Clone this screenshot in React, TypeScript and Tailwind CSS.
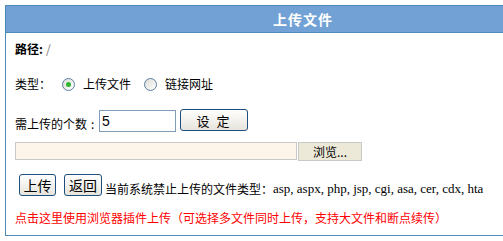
import React from 'react';

const cjk = "font-['Noto_Sans_CJK_SC',sans-serif]";

const Radio = ({ checked }: { checked: boolean }) => (
  <span className="flex h-[13px] w-[13px] items-center justify-center rounded-full border border-[#5a7ea5] bg-gradient-to-br from-[#dcdcd6] to-white">
    {checked && <span className="h-[5px] w-[5px] rounded-full bg-[#2fb52f]" />}
  </span>
);

const XpButton = ({ label, className }: { label: string; className?: string }) => (
  <button
    className={`flex items-center justify-center rounded-[3px] border border-[#1f4f7d] bg-gradient-to-b from-white to-[#e6e4dc] leading-none text-black ${className ?? ''}`}
  >
    {label}
  </button>
);

export default function App() {
  return (
    <div className={`h-[241px] w-[503px] overflow-hidden bg-white p-[5px] text-[12px] text-black ${cjk}`}>
      <div className="w-[596px] border border-[#4b8bb5]">
        <div className="flex h-[27px] items-center justify-center border-b border-[#4b8bb5] bg-[#72a2d5] text-[14px] font-bold tracking-[1px] text-white">
          上传文件
        </div>
        <div className="pb-[10px] pl-[9px]">
          <div className="mt-[8px] flex h-[16px] items-center">
            <span className="font-bold">路径:</span>
            <span className="ml-[3px] text-[#777]">/</span>
          </div>

          <div className="mt-[19px] flex h-[16px] items-center">
            <span>类型：</span>
            <span className="ml-[11px]"><Radio checked /></span>
            <span className="ml-[8px]">上传文件</span>
            <span className="ml-[13px]"><Radio checked={false} /></span>
            <span className="ml-[8px]">链接网址</span>
          </div>

          <div className="mt-[17px] flex h-[23px] items-start">
            <span className="mt-[6px] w-[84px] whitespace-nowrap">
              需上传的个数<span className="ml-[4px]">:</span>
            </span>
            <div className="mt-[1px] flex h-[22px] w-[77px] items-center border border-[#7f9db9] pl-[2px] font-['Liberation_Sans',sans-serif] text-[14px]">
              5
            </div>
            <XpButton label="设 定" className="ml-[4px] h-[22px] w-[68px] text-[13px] tracking-[2px]" />
          </div>

          <div className="mt-[10px] flex h-[19px] items-start">
            <div className="h-[18px] w-[282px] border border-[#c9c9c9] bg-[#fdf5ea]" />
            <div className="ml-[1px] flex h-[19px] w-[64px] items-center justify-center border border-[#c9c9c9] bg-[#ece9d8] text-[12px]">
              浏览...
            </div>
          </div>

          <div className="mt-[13px] flex h-[22px] items-end">
            <XpButton label="上传" className="ml-[4px] h-[22px] w-[37px] text-[14px]" />
            <XpButton label="返回" className="ml-[8px] h-[22px] w-[38px] text-[14px]" />
            <span className="ml-[3px] leading-[14px]">当前系统禁止上传的文件类型：</span>
            <span className="font-['Liberation_Serif',serif] text-[13px] leading-[14px]">
              asp, aspx, php, jsp, cgi, asa, cer, cdx, hta
            </span>
          </div>

          <div className="mt-[15px] flex h-[14px] items-center text-[#ff0000]">
            点击这里使用浏览器插件上传（可选择多文件同时上传，支持大文件和断点续传）
          </div>
        </div>
      </div>
    </div>
  );
}
